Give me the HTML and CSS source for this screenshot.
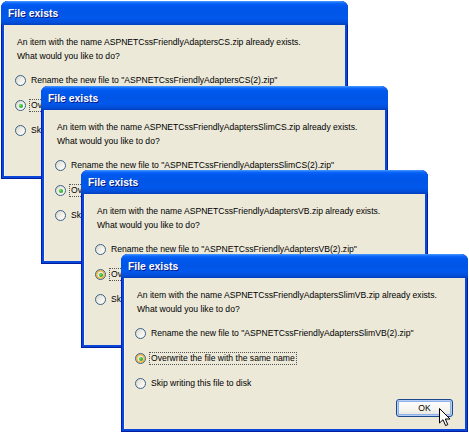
FILE: index.html
```html
<!DOCTYPE html>
<html>
<head>
<meta charset="utf-8">
<link rel="stylesheet" href="styles.css">
</head>
<body>
<div class="desk">
  <div class="dlg d1">
    <div class="title">File exists</div>
    <div class="body">
      <p class="msg">An item with the name ASPNETCssFriendlyAdaptersCS.zip already exists.<br>What would you like to do?</p>
      <div class="opts">
        <div class="opt"><span class="radio"></span><span class="lbl">Rename the new file to "ASPNETCssFriendlyAdaptersCS(2).zip"</span></div>
        <div class="opt"><span class="radio on"></span><span class="lbl focus">Overwrite the file with the same name</span></div>
        <div class="opt"><span class="radio"></span><span class="lbl">Skip writing this file to disk</span></div>
      </div>
      <div class="btns"><span class="btn">OK</span></div>
    </div>
  </div>
  <div class="dlg d2">
    <div class="title">File exists</div>
    <div class="body">
      <p class="msg">An item with the name ASPNETCssFriendlyAdaptersSlimCS.zip already exists.<br>What would you like to do?</p>
      <div class="opts">
        <div class="opt"><span class="radio"></span><span class="lbl">Rename the new file to "ASPNETCssFriendlyAdaptersSlimCS(2).zip"</span></div>
        <div class="opt"><span class="radio on"></span><span class="lbl focus">Overwrite the file with the same name</span></div>
        <div class="opt"><span class="radio"></span><span class="lbl">Skip writing this file to disk</span></div>
      </div>
      <div class="btns"><span class="btn">OK</span></div>
    </div>
  </div>
  <div class="dlg d3">
    <div class="title">File exists</div>
    <div class="body">
      <p class="msg">An item with the name ASPNETCssFriendlyAdaptersVB.zip already exists.<br>What would you like to do?</p>
      <div class="opts">
        <div class="opt"><span class="radio"></span><span class="lbl">Rename the new file to "ASPNETCssFriendlyAdaptersVB(2).zip"</span></div>
        <div class="opt"><span class="radio on hot"></span><span class="lbl focus">Overwrite the file with the same name</span></div>
        <div class="opt"><span class="radio"></span><span class="lbl">Skip writing this file to disk</span></div>
      </div>
      <div class="btns"><span class="btn">OK</span></div>
    </div>
  </div>
  <div class="dlg d4">
    <div class="title">File exists</div>
    <div class="body">
      <p class="msg">An item with the name ASPNETCssFriendlyAdaptersSlimVB.zip already exists.<br>What would you like to do?</p>
      <div class="opts">
        <div class="opt"><span class="radio"></span><span class="lbl">Rename the new file to "ASPNETCssFriendlyAdaptersSlimVB(2).zip"</span></div>
        <div class="opt"><span class="radio on hot"></span><span class="lbl focus">Overwrite the file with the same name</span></div>
        <div class="opt"><span class="radio"></span><span class="lbl">Skip writing this file to disk</span></div>
      </div>
      <div class="btns"><span class="btn def">OK</span></div>
    </div>
  </div>
  <svg class="cursor" width="12" height="19" viewBox="0 0 12 19">
    <path d="M0.5 0.5 L0.5 15 L4 11.7 L6.6 17.6 L8.8 16.6 L6.3 11 L11 11 Z" fill="#fff" stroke="#000" stroke-width="1" stroke-linejoin="miter"/>
  </svg>
</div>
</body>
</html>
```

FILE: styles.css
```css
html, body {
  margin: 0;
  padding: 0;
  background: #ffffff;
}

.desk {
  position: relative;
  width: 469px;
  height: 433px;
  overflow: hidden;
  font-family: "Liberation Sans", Arial, sans-serif;
  font-size: 8.6px;
  color: #000;
}

.dlg {
  position: absolute;
  width: 347px;
  height: 178px;
  box-sizing: border-box;
  display: flex;
  flex-direction: column;
  background: #0A46D8;
  border-radius: 7px 7px 0 0;
  box-shadow: inset 1px 0 0 #0019CF, inset -1px 0 0 #001EA0, inset 0 -1px 0 #001EA0;
}

.d1 { left: 1px; top: 1px; }
.d2 { left: 41px; top: 86px; }
.d3 { left: 81px; top: 170px; }
.d4 { left: 121px; top: 254px; }

.title {
  height: 24px;
  flex: none;
  box-sizing: border-box;
  padding: 6px 0 0 7px;
  border-radius: 7px 7px 0 0;
  background: linear-gradient(to bottom,
    #4C9BFF 0%, #0A66FA 9%, #0058EE 20%, #0055E6 50%, #0259EE 70%, #024ED8 90%, #013FC0 100%);
  color: #fff;
  font-weight: bold;
  font-size: 10.4px;
  line-height: 14px;
  text-shadow: 1px 1px 0 #0A1883;
}

.body {
  flex: 1;
  margin: 0 3px 3px;
  background: #ECE9D8;
  padding: 10px 12px 0 13px;
  display: flex;
  flex-direction: column;
  box-shadow: inset 1px 0 0 #F4F3EC;
}

.msg {
  margin: 0;
  line-height: 14px;
}

.opts {
  margin-top: 5px;
  display: flex;
  flex-direction: column;
}

.opt {
  height: 25px;
  display: flex;
  align-items: center;
  gap: 3px;
}

.radio {
  position: relative;
  width: 11px;
  height: 11px;
  flex: none;
  margin-left: -2px;
  box-sizing: border-box;
  border-radius: 50%;
  border: 1px solid #3A6287;
  background: linear-gradient(135deg, #D8D6CA 0%, #F2F1EB 55%, #FFFFFF 100%);
}

.radio.hot {
  box-shadow: inset 0 0 0 1.5px #F6B13A;
}

.radio.on::after {
  content: "";
  position: absolute;
  left: 2.5px;
  top: 2.5px;
  width: 4px;
  height: 4px;
  border-radius: 50%;
  background: radial-gradient(circle at 35% 35%, #6BE06A 0%, #29B42A 55%, #1A8B1A 100%);
}

.lbl {
  line-height: 11px;
  padding: 0 1px;
  border: 1px dotted transparent;
}

.lbl.focus {
  border-color: #555;
}

.btns {
  margin-top: auto;
  margin-bottom: 12px;
  display: flex;
  justify-content: flex-end;
}

.btn {
  width: 57px;
  height: 18px;
  box-sizing: border-box;
  display: flex;
  align-items: center;
  justify-content: center;
  border: 1px solid #1B4A8C;
  border-radius: 3px;
  background: linear-gradient(to bottom, #FFFFFF 0%, #F6F5F0 60%, #E4E2DA 100%);
  font-size: 8.6px;
}

.btn.def {
  box-shadow: inset 0 0 0 1px #B7CEF2, inset 0 0 0 2px #90B2EA;
}

.cursor {
  position: absolute;
  left: 439px;
  top: 408px;
}
```
